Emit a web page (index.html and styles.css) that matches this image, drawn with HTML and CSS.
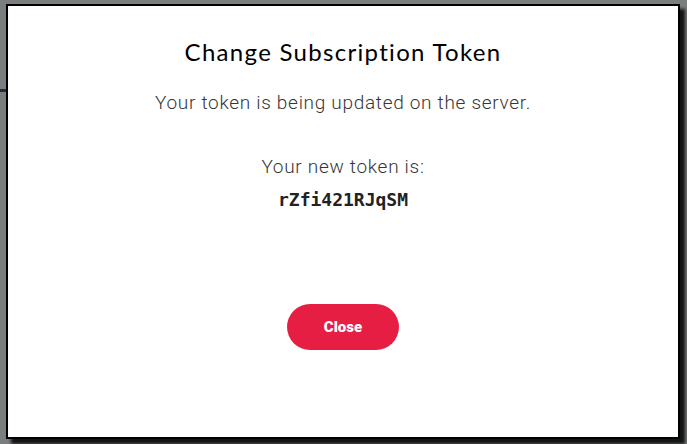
FILE: index.html
```html
<!doctype html>
<html lang="en">
<head>
    <meta charset="UTF-8">
    <title>Change Subscription Token</title>
    <link rel="stylesheet" href="styles.css">
</head>
<body>
<div class="backdrop">
    <div class="behind"></div>
    <div class="modal">
        <h2 class="title">Change Subscription Token</h2>
        <p class="text">Your token is being updated on the server.</p>
        <p class="text new">Your new token is:</p>
        <code class="token">rZfi421RJqSM</code>
        <button class="close">Close</button>
    </div>
</div>
</body>
</html>
```

FILE: styles.css
```css
* {
    box-sizing: border-box;
}

body {
    margin: 0;
    background: #7b7e7e;
}

.backdrop {
    position: relative;
    width: 687px;
    height: 444px;
    padding: 4px 0 0 6px;
    overflow: hidden;
}

.behind {
    position: absolute;
    left: 0;
    top: 89px;
    width: 6px;
    height: 3px;
    background: #2b2a33;
}

.modal {
    width: 674px;
    height: 435px;
    background: #fff;
    border: 2px solid #000;
    box-shadow: 5px 5px 3px rgba(0, 0, 0, 0.85);
    display: flex;
    flex-direction: column;
    align-items: center;
    font-family: "Roboto", "Liberation Sans", sans-serif;
}

.title {
    margin: 31px 0 0;
    font-family: "Lato", "Liberation Sans", sans-serif;
    font-weight: 400;
    font-size: 24px;
    letter-spacing: 1.3px;
    line-height: 30px;
    color: #000;
}

.text {
    margin: 24px 0 0;
    font-size: 19px;
    font-weight: 300;
    letter-spacing: 0.7px;
    line-height: 24px;
    color: #363636;
}

.text.new {
    margin-top: 40px;
}

.token {
    margin-top: 9px;
    font-family: "DejaVu Sans Mono", "Liberation Mono", monospace;
    font-weight: 700;
    font-size: 18px;
    line-height: 24px;
    color: #222;
}

.close {
    margin-top: 92px;
    width: 112px;
    height: 46px;
    border: none;
    border-radius: 23px;
    background: #e61e43;
    color: #fff;
    font-family: "Roboto", "Liberation Sans", sans-serif;
    font-weight: 900;
    font-size: 15px;
}
```
